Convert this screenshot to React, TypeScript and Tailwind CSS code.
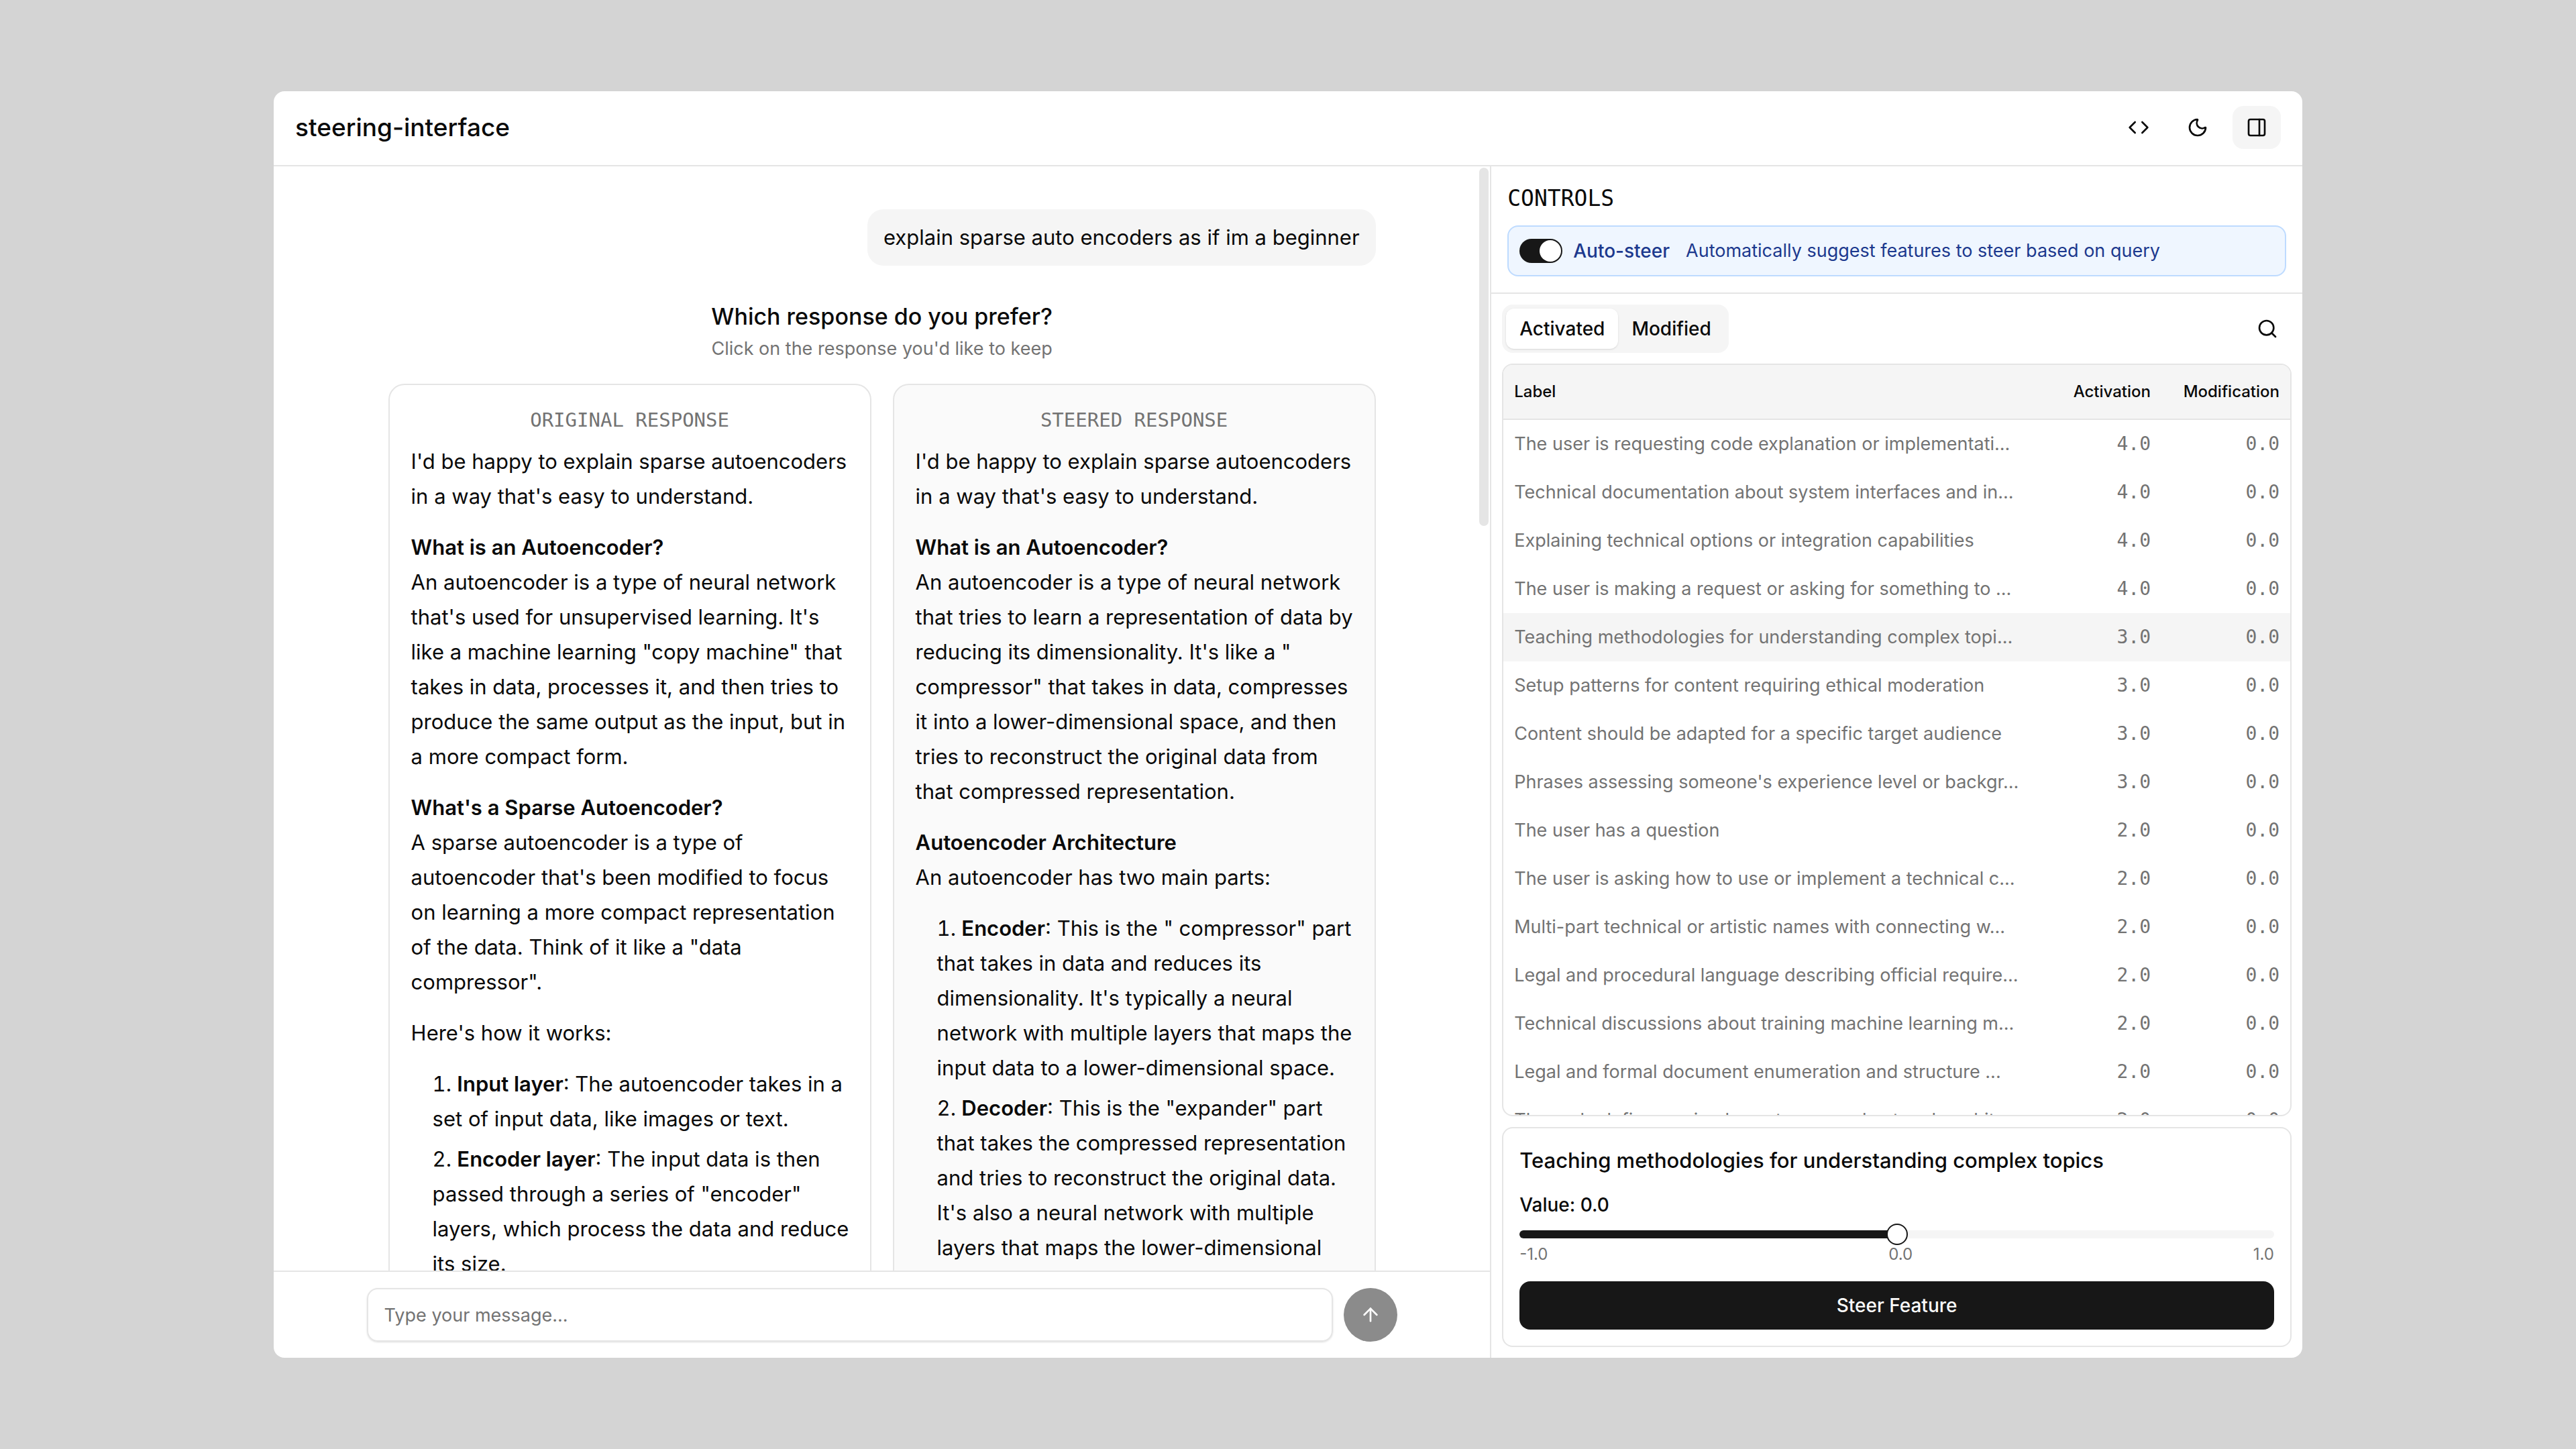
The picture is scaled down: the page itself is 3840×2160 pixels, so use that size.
import { useState } from "react";
import type { ReactNode } from "react";
import { ArrowUp, Code, Moon, PanelRight, Search } from "lucide-react";

const mono = "font-['DejaVu_Sans_Mono',monospace]";

const features: [string, string][] = [
  ["The user is requesting code explanation or implementati...", "4.0"],
  ["Technical documentation about system interfaces and in...", "4.0"],
  ["Explaining technical options or integration capabilities", "4.0"],
  ["The user is making a request or asking for something to ...", "4.0"],
  ["Teaching methodologies for understanding complex topi...", "3.0"],
  ["Setup patterns for content requiring ethical moderation", "3.0"],
  ["Content should be adapted for a specific target audience", "3.0"],
  ["Phrases assessing someone's experience level or backgr...", "3.0"],
  ["The user has a question", "2.0"],
  ["The user is asking how to use or implement a technical c...", "2.0"],
  ["Multi-part technical or artistic names with connecting w...", "2.0"],
  ["Legal and procedural language describing official require...", "2.0"],
  ["Technical discussions about training machine learning m...", "2.0"],
  ["Legal and formal document enumeration and structure ...", "2.0"],
  ["The code defines a simple custom neural network archit...", "2.0"],
];

function ResponseCard({ title, tinted, children }: { title: string; tinted?: boolean; children: ReactNode }) {
  return (
    <section
      role="button"
      tabIndex={0}
      aria-label={title}
      className={`flex min-w-0 flex-1 flex-col gap-4 rounded-3xl border-2 border-neutral-200 py-8 ${tinted ? "bg-neutral-50" : "bg-white"}`}
    >
      <h3 className={`px-8 text-center text-[29px] leading-10 text-neutral-500 uppercase ${mono}`}>{title}</h3>
      <div className="flex flex-col gap-6 pr-6 pl-8 text-[31px] leading-[52px]">{children}</div>
    </section>
  );
}

function Steps({ items }: { items: [string, string][] }) {
  return (
    <ol className="flex list-inside list-decimal flex-col gap-2 pl-8">
      {items.map(([name, text]) => (
        <li key={name}>
          <strong className="font-semibold">{name}</strong>: {text}
        </li>
      ))}
    </ol>
  );
}

function Section({ heading, children }: { heading: string; children: ReactNode }) {
  return (
    <p>
      <strong className="font-semibold">{heading}</strong>
      <br />
      {children}
    </p>
  );
}

function Header() {
  return (
    <header className="flex shrink-0 items-center justify-between border-b-2 border-neutral-200 px-8 pt-[22px] pb-6">
      <h1 className="text-[37px] leading-[56px] font-medium">steering-interface</h1>
      <div className="flex gap-4">
        <button aria-label="View code" className="flex h-16 w-18 items-center justify-center rounded-2xl">
          <Code size={32} />
        </button>
        <button aria-label="Dark mode" className="flex h-16 w-18 items-center justify-center rounded-2xl">
          <Moon size={32} />
        </button>
        <button aria-label="Toggle panel" className="flex h-16 w-18 items-center justify-center rounded-2xl bg-neutral-100">
          <PanelRight size={32} />
        </button>
      </div>
    </header>
  );
}

function Chat() {
  const [message, setMessage] = useState("");
  return (
    <main className="flex min-w-0 flex-[3] flex-col">
      <div className="relative min-h-0 flex-1 overflow-hidden">
        <div className="mx-auto flex max-w-[1536px] flex-col px-8 pt-16">
          <p className="self-end rounded-3xl bg-neutral-100 px-6 py-4 text-[31px] leading-[52px]">
            explain sparse auto encoders as if im a beginner
          </p>
          <div className="pt-12 pb-8 text-center">
            <h2 className="text-[34px] leading-[56px] font-medium">Which response do you prefer?</h2>
            <p className="text-[27px] leading-10 text-neutral-500">Click on the response you'd like to keep</p>
          </div>
          <div className="flex gap-8">
            <ResponseCard title="Original response">
              <p>I'd be happy to explain sparse autoencoders in a way that's easy to understand.</p>
              <Section heading="What is an Autoencoder?">
                An autoencoder is a type of neural network that's used for unsupervised learning. It's like a machine
                learning "copy machine" that takes in data, processes it, and then tries to produce the same output as
                the input, but in a more compact form.
              </Section>
              <Section heading="What's a Sparse Autoencoder?">
                A sparse autoencoder is a type of autoencoder that's been modified to focus on learning a more compact
                representation of the data. Think of it like a "data compressor".
              </Section>
              <p>Here's how it works:</p>
              <Steps
                items={[
                  ["Input layer", "The autoencoder takes in a set of input data, like images or text."],
                  [
                    "Encoder layer",
                    'The input data is then passed through a series of "encoder" layers, which process the data and reduce its size.',
                  ],
                ]}
              />
            </ResponseCard>
            <ResponseCard title="Steered response" tinted>
              <p>I'd be happy to explain sparse autoencoders in a way that's easy to understand.</p>
              <Section heading="What is an Autoencoder?">
                An autoencoder is a type of neural network that tries to learn a representation of data by reducing its
                dimensionality. It's like a " compressor" that takes in data, compresses it into a lower-dimensional
                space, and then tries to reconstruct the original data from that compressed representation.
              </Section>
              <Section heading="Autoencoder Architecture">An autoencoder has two main parts:</Section>
              <Steps
                items={[
                  [
                    "Encoder",
                    'This is the " compressor" part that takes in data and reduces its dimensionality. It\'s typically a neural network with multiple layers that maps the input data to a lower-dimensional space.',
                  ],
                  [
                    "Decoder",
                    'This is the "expander" part that takes the compressed representation and tries to reconstruct the original data. It\'s also a neural network with multiple layers that maps the lower-dimensional',
                  ],
                ]}
              />
            </ResponseCard>
          </div>
        </div>
        <div className="absolute top-0.5 right-0.5 h-[534px] w-3.5 rounded-full bg-neutral-200" />
      </div>
      <form className="shrink-0 border-t-2 border-neutral-200 py-6" onSubmit={(e) => e.preventDefault()}>
        <div className="mx-auto flex max-w-[1536px] gap-4">
          <input
            aria-label="Message"
            value={message}
            onChange={(e) => setMessage(e.target.value)}
            placeholder="Type your message..."
            className="h-20 min-w-0 flex-1 rounded-2xl border-2 border-neutral-200 px-6 text-[27px] shadow-sm placeholder:text-neutral-500"
          />
          <button aria-label="Send" className="flex size-20 items-center justify-center rounded-full bg-[#8b8b8b] text-white">
            <ArrowUp size={32} />
          </button>
        </div>
      </form>
    </main>
  );
}

function FeatureTable() {
  return (
    <div className="min-h-0 flex-1 overflow-hidden rounded-2xl border-2 border-neutral-200">
      <table className="w-full table-fixed border-separate border-spacing-0">
        <thead>
          <tr className="h-[82px] bg-neutral-100 text-2xl *:border-b-2 *:border-neutral-200 *:px-4 *:font-medium">
            <th className="text-left">Label</th>
            <th className="w-42 text-right">Activation</th>
            <th className="w-48 text-right">Modification</th>
          </tr>
        </thead>
        <tbody>
          {features.map(([label, activation], i) => (
            <tr key={label} className={`h-18 leading-10 text-neutral-500 *:px-4 ${i === 4 ? "bg-neutral-100" : ""}`}>
              <td className="overflow-hidden text-[27px] whitespace-nowrap">{label}</td>
              <td className={`text-right text-[28px] ${mono}`}>{activation}</td>
              <td className={`text-right text-[28px] ${mono}`}>0.0</td>
            </tr>
          ))}
        </tbody>
      </table>
    </div>
  );
}

function SteerCard() {
  const [value, setValue] = useState(0);
  const percent = (value + 1) * 50;
  return (
    <div className="flex shrink-0 flex-col gap-6 rounded-2xl border-2 border-neutral-200 p-6">
      <h3 className="text-[31px] leading-[48px] font-medium">Teaching methodologies for understanding complex topics</h3>
      <div>
        <label htmlFor="steer-value" className="block pb-5 text-[28px] leading-9 font-medium">
          Value: {value.toFixed(1)}
        </label>
        <input
          id="steer-value"
          type="range"
          min={-1}
          max={1}
          step={0.1}
          value={value}
          onChange={(e) => setValue(Number(e.target.value))}
          style={{ background: `linear-gradient(to right, #171717 ${percent}%, #f5f5f5 ${percent}%)` }}
          className="block h-3 w-full appearance-none rounded-full [&::-webkit-slider-runnable-track]:h-3 [&::-webkit-slider-thumb]:-mt-2.5 [&::-webkit-slider-thumb]:size-8 [&::-webkit-slider-thumb]:appearance-none [&::-webkit-slider-thumb]:rounded-full [&::-webkit-slider-thumb]:border-2 [&::-webkit-slider-thumb]:border-solid [&::-webkit-slider-thumb]:border-neutral-900 [&::-webkit-slider-thumb]:bg-white"
        />
        <div className="flex justify-between pt-2 text-2xl leading-8 text-neutral-500">
          <span>-1.0</span>
          <span>0.0</span>
          <span>1.0</span>
        </div>
      </div>
      <button className="h-18 rounded-2xl bg-neutral-900 text-[28px] font-medium text-neutral-50">Steer Feature</button>
    </div>
  );
}

function Controls() {
  const [tab, setTab] = useState("Activated");
  const [auto, setAuto] = useState(true);
  return (
    <aside className="flex min-w-0 flex-[2] flex-col border-l-2 border-neutral-200">
      <div className="flex flex-col gap-4 border-b-2 border-neutral-200 p-6">
        <h2 className={`text-[33px] leading-[48px] ${mono}`}>CONTROLS</h2>
        <label className="flex items-center gap-4 rounded-2xl border-2 border-blue-200 bg-blue-50 p-4 leading-10 text-blue-900">
          <input
            type="checkbox"
            role="switch"
            checked={auto}
            onChange={(e) => setAuto(e.target.checked)}
            className="flex h-9 w-16 appearance-none items-center rounded-full bg-neutral-300 p-0.5 before:size-8 before:rounded-full before:bg-white checked:justify-end checked:bg-neutral-900"
          />
          <span className="pr-2 text-[28px] font-medium">Auto-steer</span>
          <span className="text-[27px]">Automatically suggest features to steer based on query</span>
        </label>
      </div>
      <div className="flex min-h-0 flex-1 flex-col gap-4 p-4">
        <div className="flex items-center justify-between">
          <div role="tablist" className="flex rounded-2xl bg-neutral-100 p-1.5 text-[28px] leading-10 font-medium">
            {["Activated", "Modified"].map((name) => (
              <button
                key={name}
                role="tab"
                aria-selected={tab === name}
                onClick={() => setTab(name)}
                className={`rounded-xl px-5 py-2.5 ${tab === name ? "bg-white shadow-sm" : ""}`}
              >
                {name}
              </button>
            ))}
          </div>
          <button aria-label="Search" className="flex size-18 items-center justify-center">
            <Search size={32} />
          </button>
        </div>
        <FeatureTable />
        <SteerCard />
      </div>
    </aside>
  );
}

export default function App() {
  return (
    <div className="h-screen bg-[#d4d4d4] px-[408px] py-[136px] font-[Inter,sans-serif] text-neutral-950">
      <div className="flex h-full flex-col overflow-hidden rounded-2xl bg-white">
        <Header />
        <div className="flex min-h-0 flex-1">
          <Chat />
          <Controls />
        </div>
      </div>
    </div>
  );
}
